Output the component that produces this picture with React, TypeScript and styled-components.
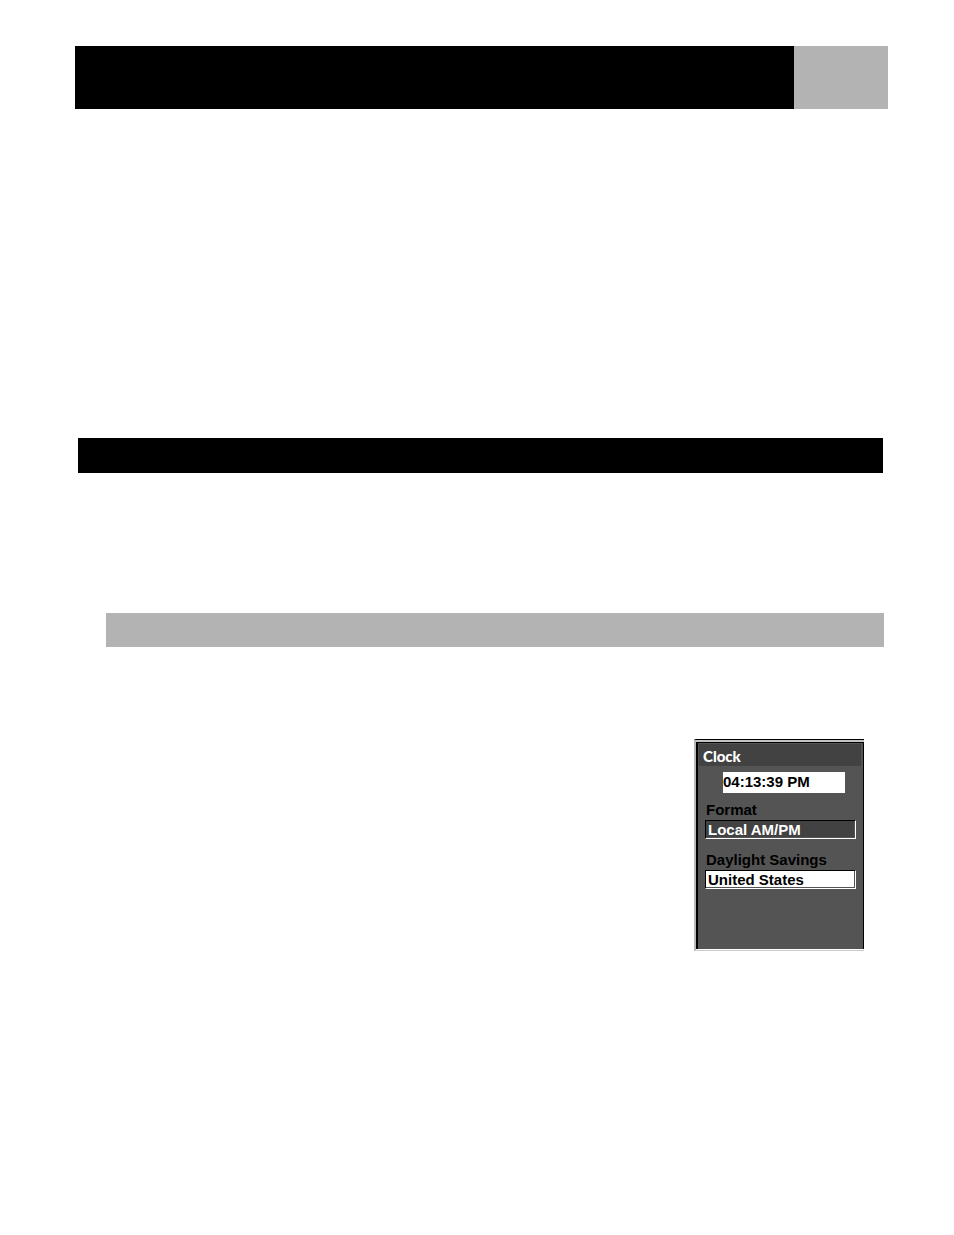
import React from "react";
import styled, { createGlobalStyle } from "styled-components";

const GlobalStyle = createGlobalStyle`
  * { box-sizing: border-box; }
  body {
    margin: 0;
    background: #fff;
    color: #000;
    font-family: "Liberation Sans", Arial, sans-serif;
  }
`;

const Page = styled.main`
  display: flex;
  flex-direction: column;
  padding: 46px 66px 284px 75px;
`;

const Header = styled.header`
  display: flex;
  height: 63px;
  background: #000;
`;

const PageTab = styled.div`
  width: 94px;
  margin-left: auto;
  background: #b3b3b3;
`;

const SectionBar = styled.div`
  height: 35px;
  margin: 329px 5px 0 3px;
  background: #000;
`;

const SubsectionBar = styled.div`
  height: 34px;
  margin: 140px 4px 0 31px;
  background: #b3b3b3;
`;

const Frame = styled.section`
  align-self: flex-end;
  width: 170px;
  margin: 92px 24px 0 0;
  border-style: solid;
  border-width: 1px 0 1px 2px;
  border-color: #000 #000 #ccc #b8b8b8;
`;

const Bezel = styled.div`
  padding-bottom: 1px;
  border-top: 2px solid #c4c4c4;
  background: #fff;
`;

const Screen = styled.div`
  display: flex;
  flex-direction: column;
  height: 207px;
  padding: 1px 2px 0 1px;
  border-style: solid;
  border-width: 1px 1px 0 2px;
  border-color: #000;
  background: #545454;
`;

const Title = styled.h1`
  height: 22px;
  margin: 0;
  padding-left: 4px;
  background: #424242;
  color: #fff;
  font: 900 15px/24px Lato, sans-serif;
`;

const Time = styled.time`
  width: 122px;
  height: 21px;
  margin: 6px 0 0 24px;
  background: #fff;
  font-size: 15px;
  font-weight: 700;
  line-height: 19px;
`;

const Form = styled.form`
  display: flex;
  flex-direction: column;
  gap: 12px;
  padding: 8px 5px 0 6px;
`;

const Field = styled.div`
  display: flex;
  flex-direction: column;
`;

const Label = styled.label`
  height: 19px;
  padding-left: 1px;
  font-size: 15px;
  font-weight: 700;
  line-height: 17px;
`;

const Select = styled.select<{ $active?: boolean }>`
  appearance: none;
  width: 100%;
  height: 19px;
  margin: 0;
  padding: 0 0 0 2px;
  border-style: solid;
  border-width: 1px;
  border-color: #000 #fff #fff #000;
  border-radius: 0;
  outline: 0;
  background: ${(p) => (p.$active ? "#fff" : "#424242")};
  box-shadow: inset -1px -1px 0 #545454;
  color: ${(p) => (p.$active ? "#000" : "#fff")};
  font: 700 15px/17px "Liberation Sans", Arial, sans-serif;
`;

export default function App() {
  return (
    <>
      <GlobalStyle />
      <Page>
        <Header>
          <PageTab />
        </Header>
        <SectionBar />
        <SubsectionBar />
        <Frame>
          <Bezel>
            <Screen>
              <Title>Clock</Title>
              <Time dateTime="16:13:39">04:13:39 PM</Time>
              <Form>
                <Field>
                  <Label htmlFor="format">Format</Label>
                  <Select id="format">
                    <option>Local AM/PM</option>
                  </Select>
                </Field>
                <Field>
                  <Label htmlFor="daylight">Daylight Savings</Label>
                  <Select id="daylight" $active>
                    <option>United States</option>
                  </Select>
                </Field>
              </Form>
            </Screen>
          </Bezel>
        </Frame>
      </Page>
    </>
  );
}
